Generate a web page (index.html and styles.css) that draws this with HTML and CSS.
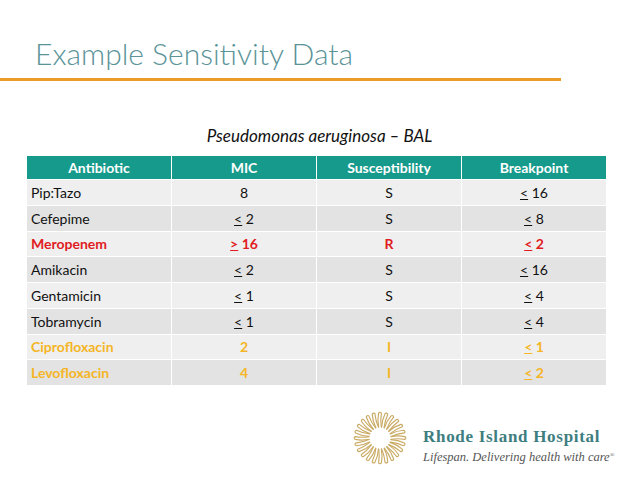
FILE: index.html
```html
<!DOCTYPE html>
<html lang="en">
<head>
<meta charset="utf-8">
<title>Example Sensitivity Data</title>
<link rel="stylesheet" href="styles.css">
</head>
<body>
<div class="slide">
  <h1 class="title">Example Sensitivity Data</h1>
  <div class="rule"></div>
  <div class="content">
    <p class="caption">Pseudomonas aeruginosa – BAL</p>
    <table class="data">
      <thead>
        <tr><th>Antibiotic</th><th>MIC</th><th>Susceptibility</th><th>Breakpoint</th></tr>
      </thead>
      <tbody>
        <tr class="odd"><td>Pip:Tazo</td><td>8</td><td>S</td><td><u>&lt;</u> 16</td></tr>
        <tr class="even"><td>Cefepime</td><td><u>&lt;</u> 2</td><td>S</td><td><u>&lt;</u> 8</td></tr>
        <tr class="odd red"><td>Meropenem</td><td><u>&gt;</u> 16</td><td>R</td><td><u>&lt;</u> 2</td></tr>
        <tr class="even"><td>Amikacin</td><td><u>&lt;</u> 2</td><td>S</td><td><u>&lt;</u> 16</td></tr>
        <tr class="odd"><td>Gentamicin</td><td><u>&lt;</u> 1</td><td>S</td><td><u>&lt;</u> 4</td></tr>
        <tr class="even"><td>Tobramycin</td><td><u>&lt;</u> 1</td><td>S</td><td><u>&lt;</u> 4</td></tr>
        <tr class="odd amber"><td>Ciprofloxacin</td><td>2</td><td>I</td><td><u>&lt;</u> 1</td></tr>
        <tr class="even amber"><td>Levofloxacin</td><td>4</td><td>I</td><td><u>&lt;</u> 2</td></tr>
      </tbody>
    </table>
  </div>
  <div class="footer">
    <svg class="sun" width="60" height="60" viewBox="-30 -30 60 60" aria-hidden="true">
      <defs>
        <path id="ray" d="M -1.3 -11 Q -2.8 -18 -1.4 -24.8 A 1.5 1.5 0 0 1 1.4 -24.8 Q 0.2 -18 1.3 -11" fill="none" stroke="#c9aa63" stroke-width="1.15" stroke-linecap="round"/>
      </defs>
      <use href="#ray" transform="rotate(0)"/>
      <use href="#ray" transform="rotate(15)"/>
      <use href="#ray" transform="rotate(30)"/>
      <use href="#ray" transform="rotate(45)"/>
      <use href="#ray" transform="rotate(60)"/>
      <use href="#ray" transform="rotate(75)"/>
      <use href="#ray" transform="rotate(90)"/>
      <use href="#ray" transform="rotate(105)"/>
      <use href="#ray" transform="rotate(120)"/>
      <use href="#ray" transform="rotate(135)"/>
      <use href="#ray" transform="rotate(150)"/>
      <use href="#ray" transform="rotate(165)"/>
      <use href="#ray" transform="rotate(180)"/>
      <use href="#ray" transform="rotate(195)"/>
      <use href="#ray" transform="rotate(210)"/>
      <use href="#ray" transform="rotate(225)"/>
      <use href="#ray" transform="rotate(240)"/>
      <use href="#ray" transform="rotate(255)"/>
      <use href="#ray" transform="rotate(270)"/>
      <use href="#ray" transform="rotate(285)"/>
      <use href="#ray" transform="rotate(300)"/>
      <use href="#ray" transform="rotate(315)"/>
      <use href="#ray" transform="rotate(330)"/>
      <use href="#ray" transform="rotate(345)"/>
    </svg>
    <div class="brand">
      <div class="brand-name">Rhode Island Hospital</div>
      <div class="brand-tag">Lifespan. Delivering health with care<sup>®</sup></div>
    </div>
  </div>
</div>
</body>
</html>
```

FILE: styles.css
```css
html, body {
  margin: 0;
  padding: 0;
  background: #ffffff;
}

.slide {
  width: 638px;
  height: 479px;
  overflow: hidden;
  font-family: "Lato", "Open Sans", sans-serif;
  color: #111;
}

.title {
  margin: 0;
  padding: 35px 0 0 35px;
  font-size: 30px;
  line-height: 36px;
  font-weight: 300;
  color: #5a9398;
}

.rule {
  margin-top: 7px;
  width: 561px;
  height: 3px;
  background: #eb9c27;
}

.content {
  margin: 45px 0 0 26px;
  width: 581px;
}

.caption {
  margin: 0 0 9px 0;
  text-align: center;
  font-style: italic;
  font-size: 17px;
  line-height: 20px;
  padding-left: 6px;
}

.data {
  width: 581px;
  border-collapse: collapse;
  table-layout: fixed;
  font-size: 14px;
}

.data th,
.data td {
  border: 1px solid #ffffff;
  padding: 0 4px;
  text-align: center;
  vertical-align: middle;
}

.data td:first-child {
  text-align: left;
}

.data thead tr {
  height: 24px;
}

.data th {
  background: #169a8b;
  color: #ffffff;
  font-weight: 700;
}

.data tbody tr {
  height: 25.75px;
}

.data tr.odd td {
  background: #efefef;
}

.data tr.even td {
  background: #e3e3e3;
}

.data tr.red td {
  color: #e11b22;
  font-weight: 700;
}

.data tr.amber td {
  color: #f4b526;
  font-weight: 700;
}

.footer {
  display: flex;
  align-items: flex-start;
  margin: 22px 0 0 350px;
  gap: 13px;
}

.sun {
  display: block;
  flex: none;
}

.brand {
  padding-top: 20px;
  font-family: "Liberation Serif", "DejaVu Serif", serif;
}

.brand-name {
  font-size: 17px;
  line-height: 18px;
  font-weight: 700;
  letter-spacing: 0.7px;
  color: #3e7d80;
}

.brand-tag {
  font-size: 12.5px;
  line-height: 18px;
  font-style: italic;
  color: #555555;
}

.brand-tag sup {
  font-size: 6px;
  vertical-align: 4px;
}
```
